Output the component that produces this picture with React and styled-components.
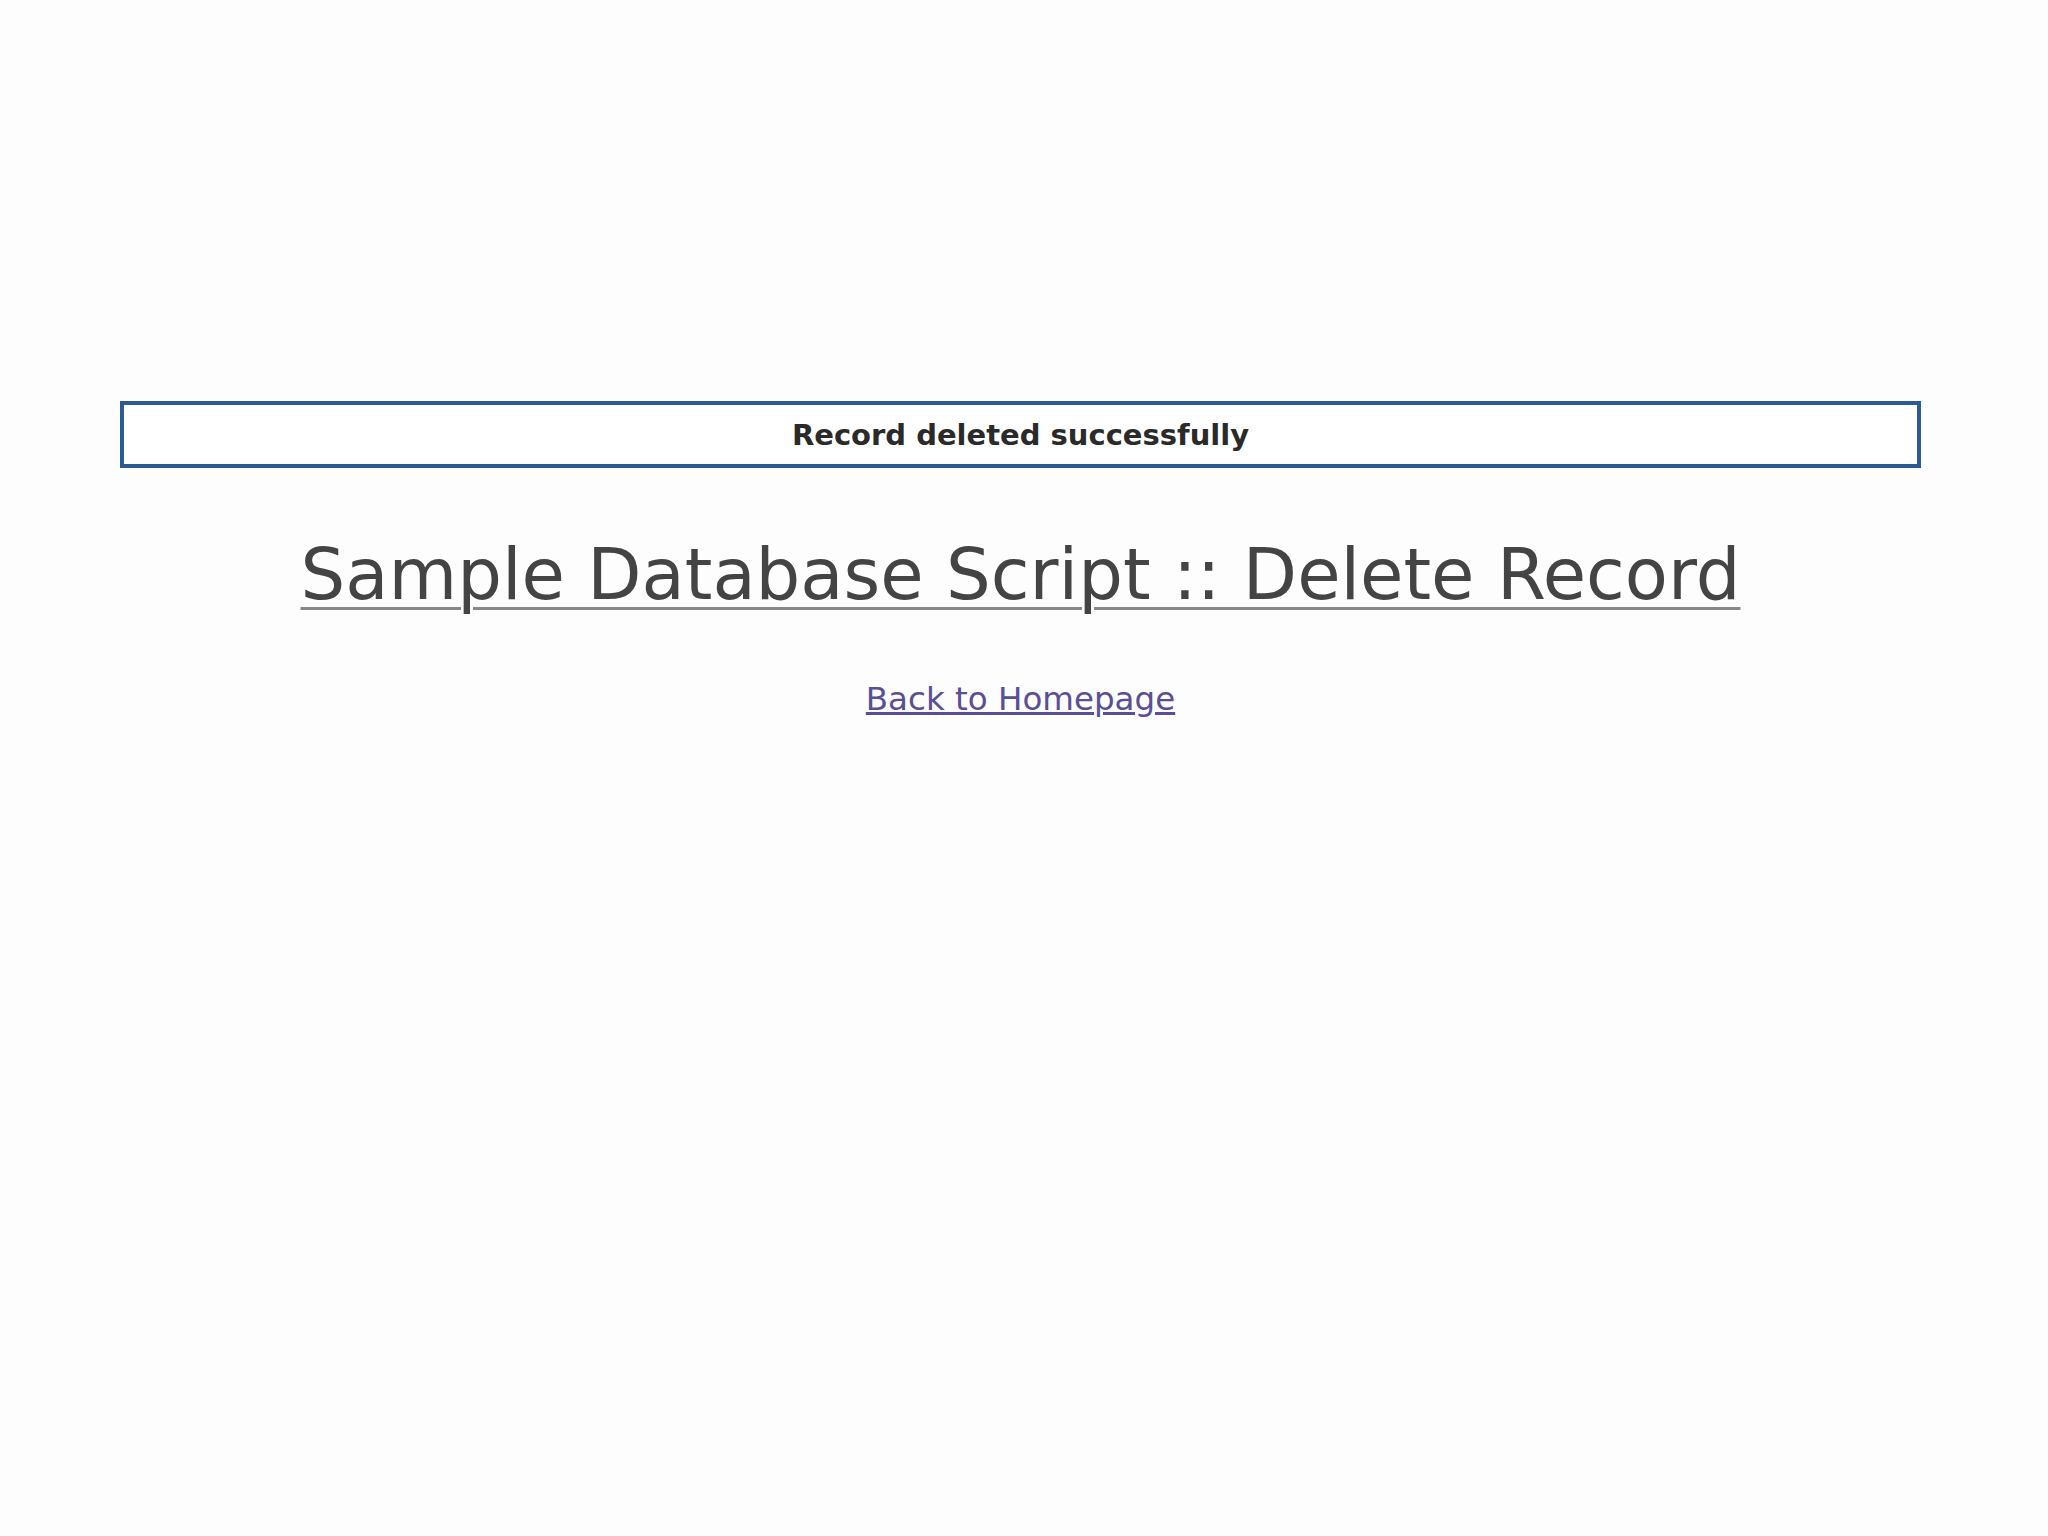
import React from 'react';
import styled, { createGlobalStyle } from 'styled-components';

const GlobalStyle = createGlobalStyle`
    body {
        margin: 0;
        background: #fdfdfd;
        font-family: "DejaVu Sans", "Liberation Sans", sans-serif;
    }
`;

const Page = styled.div`
    padding: 401px 127px 0 120px;
    display: flex;
    flex-direction: column;
    align-items: center;
`;

const Notice = styled.div`
    box-sizing: border-box;
    width: 100%;
    height: 67px;
    display: flex;
    align-items: center;
    justify-content: center;
    border: 4px solid #2c5a92;
    background: #ffffff;
    color: #2a2a2a;
    font-size: 29px;
    font-weight: 700;
`;

const Title = styled.h1`
    margin: 66px 0 0;
    color: #444444;
    font-size: 70.5px;
    font-weight: 400;
    text-decoration: underline;
    text-decoration-thickness: 3px;
    text-decoration-color: #888888;
    text-underline-offset: 8px;
`;

const HomeLink = styled.a`
    margin-top: 64px;
    color: #5a4f96;
    font-size: 32.5px;
    text-decoration: underline;
`;

function App() {
    return (
        <Page>
            <GlobalStyle />
            <Notice>Record deleted successfully</Notice>
            <Title>Sample Database Script :: Delete Record</Title>
            <HomeLink href="#">Back to Homepage</HomeLink>
        </Page>
    );
}

export default App;
